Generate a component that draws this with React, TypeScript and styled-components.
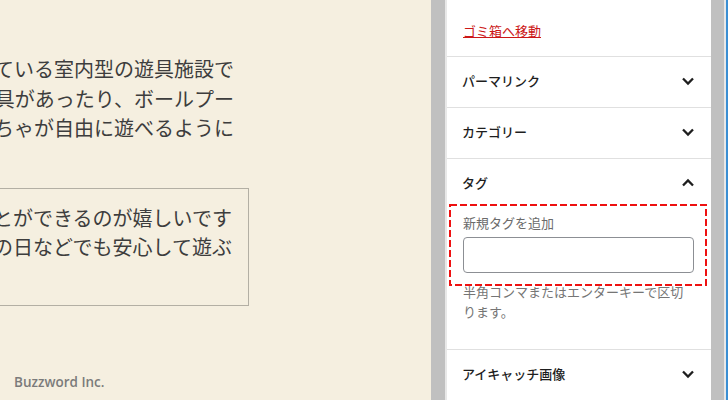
import React from 'react';
import styled, { createGlobalStyle } from 'styled-components';

const GlobalStyle = createGlobalStyle`
  html, body {
    margin: 0;
    padding: 0;
  }

  body {
    width: 728px;
    height: 400px;
    overflow: hidden;
    font-family: "Noto Sans CJK JP", "Noto Sans", sans-serif;
  }
`;

const Frame = styled.div`
  display: flex;
  width: 728px;
  height: 400px;
`;

const Canvas = styled.div`
  width: 431px;
  height: 400px;
  flex-shrink: 0;
  box-sizing: border-box;
  padding-right: 182px;
  background-color: #f5efe0;
  display: flex;
  flex-direction: column;
  align-items: flex-end;
  overflow: hidden;
`;

const Article = styled.div`
  width: 600px;
  flex-shrink: 0;
  color: #3d3d3d;
  font-size: 20px;
  line-height: 29.6px;
`;

const Paragraph = styled.div`
  margin-top: 54px;
  padding-right: 15px;
  text-align: right;
  white-space: nowrap;
`;

const Quote = styled.div`
  margin-top: 45px;
  border: 1px solid #b3afa4;
  padding: 14px 16px 43px 0;
  text-align: right;
  white-space: nowrap;
`;

const Line = styled.div``;

const Footer = styled.div`
  align-self: flex-start;
  margin-top: auto;
  padding: 0 0 8px 14px;
  font-family: "Open Sans", "Liberation Sans", sans-serif;
  font-size: 13.5px;
  font-weight: 600;
  line-height: 20px;
  color: #7b7b7b;
`;

const Rail = styled.div<{ $width: number }>`
  width: ${(p) => p.$width}px;
  flex-shrink: 0;
  background-color: #c0c0c0;
  border-right: 2px solid #e8e8e8;
`;

const Edge = styled.div`
  width: 2px;
  flex-shrink: 0;
  background-color: #3b8fd3;
`;

const Panel = styled.div`
  width: 264px;
  flex-shrink: 0;
  background-color: #fff;
  display: flex;
  flex-direction: column;
`;

const Section = styled.div`
  border-bottom: 1px solid #e0e0e0;
`;

const TrashRow = styled.div`
  height: 56px;
  box-sizing: border-box;
  padding: 17px 16px 0;
`;

const TrashLink = styled.a`
  font-size: 13px;
  line-height: 20px;
  color: #cc1818;
  text-decoration: underline;
`;

const Toggle = styled.div`
  height: 50px;
  box-sizing: border-box;
  display: flex;
  align-items: center;
  justify-content: space-between;
  padding: 0 11px 3px 15px;
  font-size: 13px;
  font-weight: 500;
  color: #1e1e1e;
`;

const Body = styled.div`
  padding: 6px 17px 27px 16px;
`;

const Field = styled.div`
  position: relative;
`;

const Highlight = styled.svg`
  position: absolute;
  left: -14px;
  top: -11px;
  width: 258px;
  height: 82px;
  overflow: visible;
  pointer-events: none;
`;

const Label = styled.div`
  font-size: 13px;
  line-height: 16px;
  color: #6b6b6b;
  margin-bottom: 6px;
`;

const Input = styled.div`
  height: 36px;
  box-sizing: border-box;
  border: 1px solid #8c8f94;
  border-radius: 4px;
`;

const Help = styled.p`
  margin: 9px 0 0;
  font-size: 13px;
  line-height: 20px;
  color: #757575;
`;

const Chevron: React.FC<{ up?: boolean }> = ({ up }) => (
  <svg width="24" height="24" viewBox="0 0 24 24" fill="none" stroke="#1e1e1e" strokeWidth="2.3">
    {up ? <path d="M7 14.5l5-5 5 5" /> : <path d="M7 9.5l5 5 5-5" />}
  </svg>
);

const PanelToggle: React.FC<{ title: string; open?: boolean }> = ({ title, open }) => (
  <Toggle>
    <span>{title}</span>
    <Chevron up={open} />
  </Toggle>
);

const App: React.FC = () => {
  return (
    <>
      <GlobalStyle />
      <Frame>
        <Canvas>
          <Article>
            <Paragraph>
              <Line>ショッピングモールの中に作られている室内型の遊具施設で</Line>
              <Line>す。色々な種類の遊具があったり、ボールプー</Line>
              <Line>ルがあったり、子供たちがおもちゃが自由に遊べるように</Line>
            </Paragraph>
            <Quote>
              <Line>室内なので天候を気にせず遊ぶことができるのが嬉しいです</Line>
              <Line>ね。暑い日や雨の日などでも安心して遊ぶ</Line>
            </Quote>
          </Article>
          <Footer>Buzzword Inc.</Footer>
        </Canvas>
        <Rail $width={14} />
        <Panel>
          <Section>
            <TrashRow>
              <TrashLink>ゴミ箱へ移動</TrashLink>
            </TrashRow>
          </Section>
          <Section>
            <PanelToggle title="パーマリンク" />
          </Section>
          <Section>
            <PanelToggle title="カテゴリー" />
          </Section>
          <Section>
            <PanelToggle title="タグ" open />
            <Body>
              <Field>
                <Highlight viewBox="0 0 258 82">
                  <rect
                    x="1"
                    y="1"
                    width="256"
                    height="80"
                    fill="none"
                    stroke="#ee1111"
                    strokeWidth="2"
                    strokeDasharray="7 3"
                  />
                </Highlight>
                <Label>新規タグを追加</Label>
                <Input />
              </Field>
              <Help>半角コンマまたはエンターキーで区切ります。</Help>
            </Body>
          </Section>
          <Section>
            <PanelToggle title="アイキャッチ画像" />
          </Section>
        </Panel>
        <Rail $width={13} />
        <Edge />
      </Frame>
    </>
  );
};

export default App;
